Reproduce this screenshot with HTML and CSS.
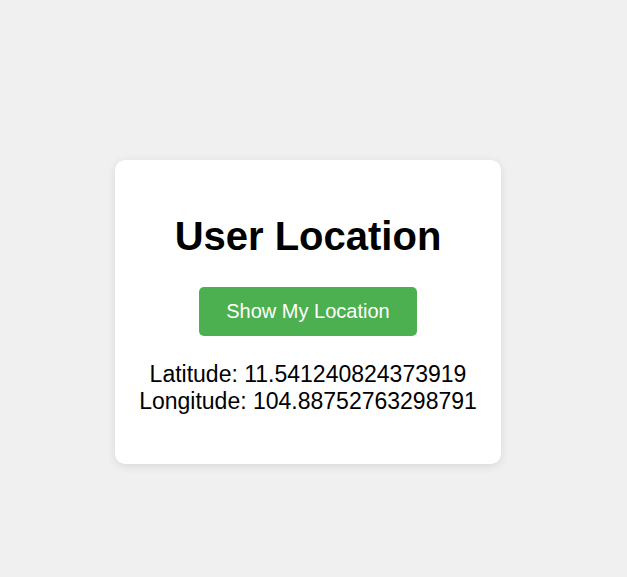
FILE: index.html
```html
<!DOCTYPE html>
<html lang="en">
<head>
<meta charset="UTF-8">
<title>User Location</title>
<link rel="stylesheet" href="styles.css">
</head>
<body>
  <main class="card">
    <h1 class="title">User Location</h1>
    <button class="btn" type="button">Show My Location</button>
    <p class="coords">Latitude: 11.541240824373919<br>Longitude: 104.88752763298791</p>
  </main>
</body>
</html>
```
FILE: styles.css
```css
html, body {
  margin: 0;
}
body {
  box-sizing: border-box;
  min-height: 100vh;
  padding: 47px 11px 0 0;
  display: flex;
  align-items: center;
  justify-content: center;
  background: #f0f0f0;
  font-family: "Liberation Sans", Arial, sans-serif;
}
.card {
  background: #fff;
  border-radius: 10px;
  box-shadow: 0 2px 10px rgba(0, 0, 0, 0.1);
  padding: 27px 24px;
  text-align: center;
}
.title {
  font-size: 40px;
  font-weight: bold;
  margin: 27px 0 28px;
  color: #000;
}
.btn {
  font-family: inherit;
  font-size: 20px;
  color: #fff;
  background: #4caf50;
  border: none;
  border-radius: 5px;
  padding: 13px 27px;
  cursor: pointer;
}
.coords {
  font-size: 23px;
  margin: 25px 0 22px;
  color: #000;
}
```
